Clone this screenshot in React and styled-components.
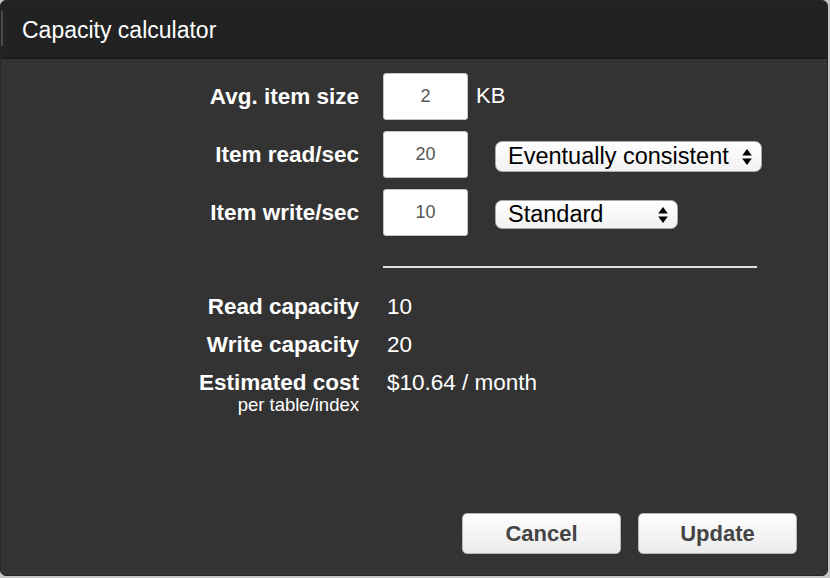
import React from "react";
import styled, { createGlobalStyle } from "styled-components";

const GlobalStyle = createGlobalStyle`
  html, body {
    margin: 0;
    padding: 0;
    background: #c6c6c6;
  }
  * {
    box-sizing: border-box;
  }
`;

const Dialog = styled.div`
  width: 828px;
  height: 576px;
  display: flex;
  flex-direction: column;
  background: #333333;
  border: 1px solid #262626;
  border-radius: 6px;
  overflow: hidden;
  font-family: "Liberation Sans", Arial, sans-serif;
  color: #ffffff;
`;

const Header = styled.div`
  position: relative;
  height: 58px;
  flex: none;
  display: flex;
  align-items: center;
  padding: 3px 0 0 21px;
  background: #222222;
  border-bottom: 2px solid #1a1a1a;
  font-size: 23px;

  &::before {
    content: "";
    position: absolute;
    left: 0;
    top: 10px;
    width: 2px;
    height: 35px;
    background: #4a4a4a;
  }
`;

const Body = styled.div`
  flex: 1;
  padding-top: 14px;
`;

const Form = styled.div`
  display: grid;
  grid-template-columns: 358px 1fr;
  column-gap: 24px;
  row-gap: 11px;
  align-items: center;
`;

const Label = styled.div`
  text-align: right;
  font-weight: bold;
  font-size: 22.5px;
  line-height: 27px;
  white-space: nowrap;
`;

const Controls = styled.div`
  display: flex;
  align-items: center;
`;

const NumberBox = styled.div`
  width: 85px;
  height: 47px;
  display: flex;
  align-items: center;
  justify-content: center;
  background: #ffffff;
  border: 1px solid #c4c4c4;
  border-radius: 3px;
  color: #555555;
  font-size: 18px;
`;

const Unit = styled.span`
  margin-left: 8px;
  margin-top: -2px;
  font-size: 22px;
`;

const Select = styled.div`
  margin-left: 27px;
  margin-top: 4px;
  width: ${(p) => p.$width}px;
  height: ${(p) => p.$height}px;
  display: flex;
  align-items: center;
  justify-content: space-between;
  padding: 0 9px 0 12px;
  background: linear-gradient(#ffffff, #f1f1f1);
  border: 1px solid #a9a9a9;
  border-radius: 7px;
  color: #000000;
  font-size: 23.5px;
  white-space: nowrap;
`;

const Divider = styled.div`
  grid-column: 2;
  width: 374px;
  height: 2px;
  margin: 19px 0 14px;
  background: #dedede;
`;

const Value = styled.div`
  padding-left: 4px;
  font-size: 22.5px;
  line-height: 27px;
  align-self: start;
`;

const Sub = styled.div`
  font-weight: normal;
  font-size: 18.5px;
  line-height: 18px;
  margin-top: 0;
`;

const Footer = styled.div`
  display: flex;
  justify-content: flex-end;
  gap: 17px;
  padding: 0 30px 21px 0;
`;

const Button = styled.button`
  width: 159px;
  height: 41px;
  background: linear-gradient(#fefefe, #ebebeb);
  border: 1px solid #b8b8b8;
  border-radius: 5px;
  color: #444444;
  font-family: "Liberation Sans", Arial, sans-serif;
  font-weight: bold;
  font-size: 22px;
  padding: 0;
`;

const Arrows = () => (
  <svg width="10" height="18" viewBox="0 0 10 18">
    <path d="M5 1 L9.8 7.5 L0.2 7.5 Z" fill="#000" />
    <path d="M5 17 L9.8 10.5 L0.2 10.5 Z" fill="#000" />
  </svg>
);

export default function App() {
  return (
    <>
      <GlobalStyle />
      <Dialog>
        <Header>Capacity calculator</Header>
        <Body>
          <Form>
            <Label>Avg. item size</Label>
            <Controls>
              <NumberBox>2</NumberBox>
              <Unit>KB</Unit>
            </Controls>

            <Label>Item read/sec</Label>
            <Controls>
              <NumberBox>20</NumberBox>
              <Select $width={267} $height={31}>
                Eventually consistent
                <Arrows />
              </Select>
            </Controls>

            <Label>Item write/sec</Label>
            <Controls>
              <NumberBox>10</NumberBox>
              <Select $width={183} $height={29}>
                Standard
                <Arrows />
              </Select>
            </Controls>

            <Divider />

            <Label>Read capacity</Label>
            <Value>10</Value>

            <Label>Write capacity</Label>
            <Value>20</Value>

            <Label>
              Estimated cost
              <Sub>per table/index</Sub>
            </Label>
            <Value>$10.64 / month</Value>
          </Form>
        </Body>
        <Footer>
          <Button>Cancel</Button>
          <Button>Update</Button>
        </Footer>
      </Dialog>
    </>
  );
}
